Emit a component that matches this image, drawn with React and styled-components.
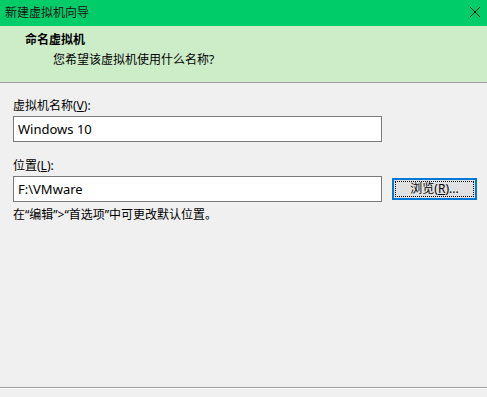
import styled, { createGlobalStyle } from "styled-components";

const GlobalStyle = createGlobalStyle`
  html, body {
    margin: 0;
    padding: 0;
    background: #f0f0f0;
    overflow: hidden;
  }
  body {
    font-family: "Noto Sans", "Noto Sans CJK SC", sans-serif;
    font-size: 12px;
    color: #000;
  }
`;

const Window = styled.div`
  width: 487px;
  height: 397px;
  display: flex;
  flex-direction: column;
  background: #f0f0f0;
`;

const TitleBar = styled.div`
  height: 26px;
  background: #00cc6a;
  display: flex;
  align-items: center;
  justify-content: space-between;
  padding: 0 5px 2px 5px;
  box-sizing: border-box;
  color: #111;
`;

const CloseBtn = styled.div`
  width: 12px;
  height: 12px;
  display: flex;
  margin-right: 1px;
`;

const Header = styled.div`
  height: 57px;
  box-sizing: border-box;
  background: #cdedc9;
  border-bottom: 1px solid #a0a0a0;
  padding: 6px 0 0 25px;
  display: flex;
  flex-direction: column;
`;

const HeaderTitle = styled.div`
  font-weight: 700;
  line-height: 16px;
`;

const HeaderSub = styled.div`
  margin: 4px 0 0 28px;
  line-height: 16px;
`;

const Body = styled.div`
  flex: 1;
  padding: 15px 0 0 13px;
  display: flex;
  flex-direction: column;
`;

const Label = styled.div`
  line-height: 16px;
  margin-bottom: ${(p) => p.$gap || 2}px;
  margin-top: ${(p) => p.$top || 0}px;
`;

const Row = styled.div`
  display: flex;
  align-items: center;
  gap: 10px;
`;

const TextBox = styled.input`
  width: 369px;
  height: 26px;
  box-sizing: border-box;
  border: 1px solid #7a7a7a;
  background: #fff;
  padding: 0 4px;
  font: inherit;
  font-size: 13px;
  color: #000;
  outline: none;
`;

const BrowseButton = styled.button`
  width: 85px;
  height: 22px;
  box-sizing: border-box;
  border: 2px solid #0078d7;
  background: #e1e1e1;
  padding: 1px;
  font: inherit;
  color: #000;
  display: flex;
  cursor: default;
`;

const FocusRect = styled.span`
  flex: 1;
  border: 1px dotted #000;
  display: flex;
  align-items: center;
  justify-content: center;
  line-height: 14px;
`;

const Hint = styled.div`
  margin-top: 5px;
  line-height: 16px;
`;

const Footer = styled.div`
  height: 9px;
  border-top: 1px solid #a0a0a0;
  box-shadow: inset 0 1px 0 #ffffff;
`;

export default function App() {
  return (
    <>
      <GlobalStyle />
      <Window>
        <TitleBar>
          <span>新建虚拟机向导</span>
          <CloseBtn>
            <svg width="12" height="12" viewBox="0 0 12 12">
              <path d="M1 1L11 11M11 1L1 11" stroke="#111" strokeWidth="1" fill="none" />
            </svg>
          </CloseBtn>
        </TitleBar>
        <Header>
          <HeaderTitle>命名虚拟机</HeaderTitle>
          <HeaderSub>您希望该虚拟机使用什么名称?</HeaderSub>
        </Header>
        <Body>
          <Label>
            虚拟机名称(<u>V</u>):
          </Label>
          <TextBox defaultValue="Windows 10" />
          <Label $top={16}>
            位置(<u>L</u>):
          </Label>
          <Row>
            <TextBox defaultValue="F:\VMware" />
            <BrowseButton>
              <FocusRect>
                浏览(<u>R</u>)...
              </FocusRect>
            </BrowseButton>
          </Row>
          <Hint>在“编辑”&gt;“首选项”中可更改默认位置。</Hint>
        </Body>
        <Footer />
      </Window>
    </>
  );
}
